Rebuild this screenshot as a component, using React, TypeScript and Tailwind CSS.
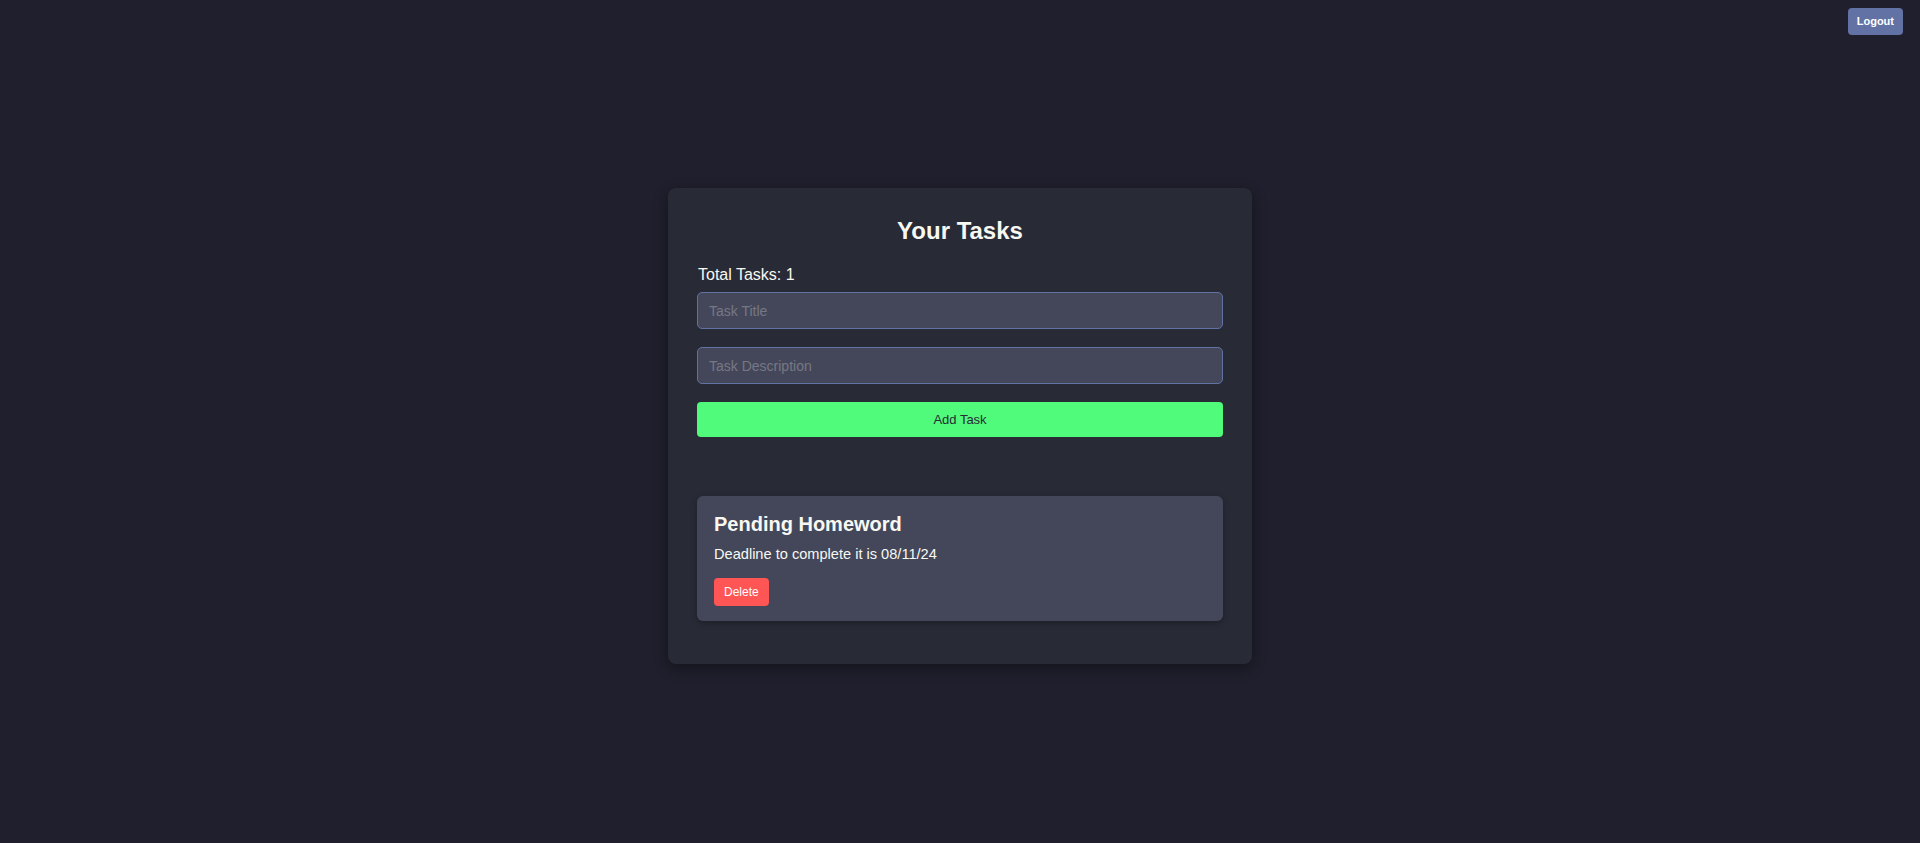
import { useState } from "react";

type Task = { id: number; title: string; description: string };

export default function App() {
  const [tasks, setTasks] = useState<Task[]>([
    { id: 1, title: "Pending Homeword", description: "Deadline to complete it is 08/11/24" },
  ]);
  const [title, setTitle] = useState("");
  const [desc, setDesc] = useState("");

  const addTask = () => {
    if (!title.trim()) return;
    setTasks((t) => [...t, { id: Date.now(), title, description: desc }]);
    setTitle("");
    setDesc("");
  };

  const input =
    "block w-full h-[37px] rounded-[5px] border border-[#6272a4] bg-[#44475a] px-[11px] text-[14px] text-[#f8f8f2] placeholder:text-[#767884] outline-none";

  return (
    <div className="relative min-h-screen bg-[#1f1f2d] font-['Liberation_Sans',Arial,sans-serif] text-[#f8f8f2]">
      <button className="absolute top-[8px] right-[17px] h-[27px] px-[9px] rounded-[4px] bg-[#6272a4] text-[11px] font-bold text-white cursor-pointer">
        Logout
      </button>

      <div className="flex justify-center pt-[188px]">
        <div className="w-[584px] rounded-[8px] bg-[#282a36] px-[29px] pt-[29px] pb-[43px] shadow-[0_4px_14px_rgba(0,0,0,0.35)]">
          <h2 className="text-center text-[24px] leading-[28px] font-bold">Your Tasks</h2>
          <div className="mt-[20px] pl-px text-[16px] leading-[20px]">Total Tasks: {tasks.length}</div>

          <input className={`${input} mt-[7px]`} placeholder="Task Title" value={title} onChange={(e) => setTitle(e.target.value)} />
          <input className={`${input} mt-[18px]`} placeholder="Task Description" value={desc} onChange={(e) => setDesc(e.target.value)} />
          <button onClick={addTask}
            className="mt-[18px] block w-full h-[35px] rounded-[4px] bg-[#50fa7b] text-[13px] text-[#282a36] cursor-pointer">
            Add Task
          </button>

          <div className="mt-[59px] flex flex-col gap-4">
            {tasks.map((t) => (
              <div key={t.id} className="rounded-[6px] bg-[#44475a] pl-[17px] pr-4 pt-4 pb-[15px] shadow-[0_2px_6px_rgba(0,0,0,0.3)]">
                <h3 className="text-[20px] leading-[24px] font-bold">{t.title}</h3>
                <p className="mt-[8px] text-[14.6px] leading-[20px]">{t.description}</p>
                <button onClick={() => setTasks((s) => s.filter((x) => x.id !== t.id))}
                  className="mt-[14px] h-[28px] px-[10px] rounded-[4px] bg-[#ff5555] text-[12px] text-white cursor-pointer">
                  Delete
                </button>
              </div>
            ))}
          </div>
        </div>
      </div>
    </div>
  );
}
